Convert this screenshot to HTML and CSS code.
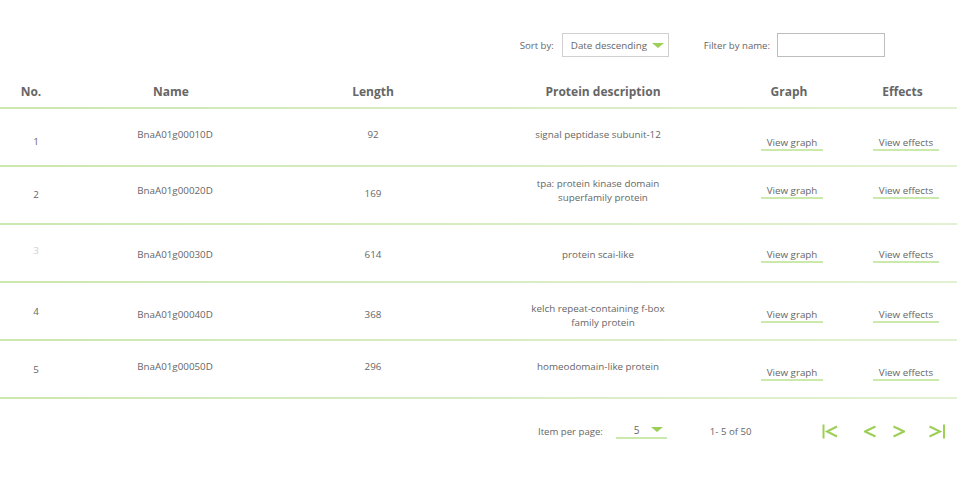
FILE: index.html
```html
<!DOCTYPE html>
<html>
<head>
<meta charset="utf-8">
<link rel="stylesheet" href="styles.css">
</head>
<body>
<div class="toolbar">
  <span class="lbl">Sort by:</span>
  <div class="sortbox"><span>Date descending</span><span class="tri"></span></div>
  <span class="lbl filter-lbl">Filter by name:</span>
  <div class="filterbox"></div>
</div>

<div class="table">
  <div class="thead">
    <div class="th">No.</div>
    <div class="th">Name</div>
    <div class="th">Length</div>
    <div class="th">Protein description</div>
    <div class="th th-graph">Graph</div>
    <div class="th">Effects</div>
  </div>

  <div class="row">
    <div class="td c-no p26">1</div>
    <div class="td c-name p19">BnaA01g00010D</div>
    <div class="td p19">92</div>
    <div class="td c-desc p19">signal peptidase subunit-12</div>
    <div class="td c-graph p27"><span class="link">View graph</span></div>
    <div class="td c-eff p27"><span class="link">View effects</span></div>
  </div>

  <div class="row">
    <div class="td c-no p21">2</div>
    <div class="td c-name p17">BnaA01g00020D</div>
    <div class="td p20">169</div>
    <div class="td c-desc p10">tpa: protein kinase domain<br><span class="ind">superfamily protein</span></div>
    <div class="td c-graph p17"><span class="link">View graph</span></div>
    <div class="td c-eff p17"><span class="link">View effects</span></div>
  </div>

  <div class="row">
    <div class="td c-no p19 faint">3</div>
    <div class="td c-name p23">BnaA01g00030D</div>
    <div class="td p23">614</div>
    <div class="td c-desc p23">protein scai-like</div>
    <div class="td c-graph p23"><span class="link">View graph</span></div>
    <div class="td c-eff p23"><span class="link">View effects</span></div>
  </div>

  <div class="row">
    <div class="td c-no p22">4</div>
    <div class="td c-name p25">BnaA01g00040D</div>
    <div class="td p25">368</div>
    <div class="td c-desc p19">kelch repeat-containing f-box<br><span class="ind">family protein</span></div>
    <div class="td c-graph p25"><span class="link">View graph</span></div>
    <div class="td c-eff p25"><span class="link">View effects</span></div>
  </div>

  <div class="row">
    <div class="td c-no p22">5</div>
    <div class="td c-name p19">BnaA01g00050D</div>
    <div class="td p19">296</div>
    <div class="td c-desc p19">homeodomain-like protein</div>
    <div class="td c-graph p25"><span class="link">View graph</span></div>
    <div class="td c-eff p25"><span class="link">View effects</span></div>
  </div>
</div>

<div class="pager">
  <span class="lbl">Item per page:</span>
  <div class="perpage"><span>5</span><span class="tri"></span></div>
  <span class="lbl range">1- 5 of 50</span>
  <div class="navs">
    <svg class="nav first" width="16" height="15" viewBox="0 0 16 15"><line x1="1.5" y1="0.5" x2="1.5" y2="14.5"/><polyline points="15,2.5 5,7.5 15,12.5"/></svg>
    <svg class="nav prev" width="12" height="15" viewBox="0 0 12 15"><polyline points="11.5,2.5 1,7.5 11.5,12.5"/></svg>
    <svg class="nav next" width="12" height="15" viewBox="0 0 12 15"><polyline points="0.5,2.5 11,7.5 0.5,12.5"/></svg>
    <svg class="nav last" width="17" height="15" viewBox="0 0 17 15"><polyline points="0.5,2.5 11,7.5 0.5,12.5"/><line x1="15" y1="0.5" x2="15" y2="14.5"/></svg>
  </div>
</div>
</body>
</html>
```

FILE: styles.css
```css
html, body {
  margin: 0;
  padding: 0;
  background: #fff;
}
body {
  font-family: "Open Sans", "Noto Sans", sans-serif;
  font-size: 10px;
  color: #666;
  width: 957px;
}

.toolbar {
  display: flex;
  justify-content: flex-end;
  align-items: center;
  padding-top: 33px;
  padding-right: 72px;
  height: 24px;
}
.lbl {
  font-size: 9.6px;
  color: #666;
  white-space: nowrap;
}
.sortbox {
  margin-left: 8px;
  width: 107px;
  height: 24px;
  border: 1px solid #d0d0d0;
  box-sizing: border-box;
  display: flex;
  align-items: center;
  padding-left: 8px;
  padding-right: 4px;
  justify-content: space-between;
  font-size: 9.8px;
}
.tri {
  width: 0;
  height: 0;
  border-left: 6.5px solid transparent;
  border-right: 6.5px solid transparent;
  border-top: 5px solid #9ccf55;
}
.filter-lbl { margin-left: 35px; }
.filterbox {
  margin-left: 7px;
  width: 108px;
  height: 24px;
  box-sizing: border-box;
  border: 1px solid #bdbdbd;
}

.table { margin-top: 18px; }
.thead, .row {
  display: grid;
  grid-template-columns: 62px 218px 186px 274px 108px 109px;
  border-bottom: 2px solid #d4ebbd;
  border-image: linear-gradient(to right, #cde7b0, #e3f1d3) 1;
}
.thead {
  height: 32px;
  align-items: center;
}
.th {
  text-align: center;
  font-weight: 700;
  font-size: 12px;
  color: #666;
  padding-top: 1px;
}
.th-graph { padding-right: 10px; }

.row {
  height: 56px;
  align-items: start;
}
.td {
  text-align: center;
  line-height: 14px;
  font-size: 9.8px;
  color: #666;
}
.c-no { padding-left: 10px; }
.c-name { padding-left: 8px; }
.c-desc { padding-right: 10px; }
.c-graph { padding-right: 4px; }
.c-eff { padding-left: 7px; }
.ind { padding-left: 10px; }
.faint { color: #cfcfcf; }

.link {
  display: inline-block;
  padding: 0 6px;
  line-height: 12px;
  border-bottom: 2px solid #cbe8ad;
}

.p10 { padding-top: 10px; }
.p17 { padding-top: 17px; }
.p19 { padding-top: 19px; }
.p20 { padding-top: 20px; }
.p21 { padding-top: 21px; }
.p22 { padding-top: 22px; }
.p23 { padding-top: 23px; }
.p25 { padding-top: 25px; }
.p26 { padding-top: 26px; }
.p27 { padding-top: 27px; }

.pager {
  display: flex;
  align-items: center;
  padding-left: 538px;
  margin-top: 23px;
  height: 18px;
}
.perpage {
  margin-left: 13px;
  width: 51px;
  box-sizing: border-box;
  height: 16px;
  border-bottom: 2px solid #cbe8ad;
  display: flex;
  align-items: center;
  padding-left: 18px;
  padding-right: 4px;
  justify-content: space-between;
}
.perpage .tri { margin-top: -2px; }
.range { margin-left: 43px; }
.navs {
  display: flex;
  align-items: center;
  margin-left: 71px;
}
.nav {
  fill: none;
  stroke: #9ccf55;
  stroke-width: 2;
}
.prev { margin-left: 26px; }
.next { margin-left: 17px; }
.last { margin-left: 24px; }
```
